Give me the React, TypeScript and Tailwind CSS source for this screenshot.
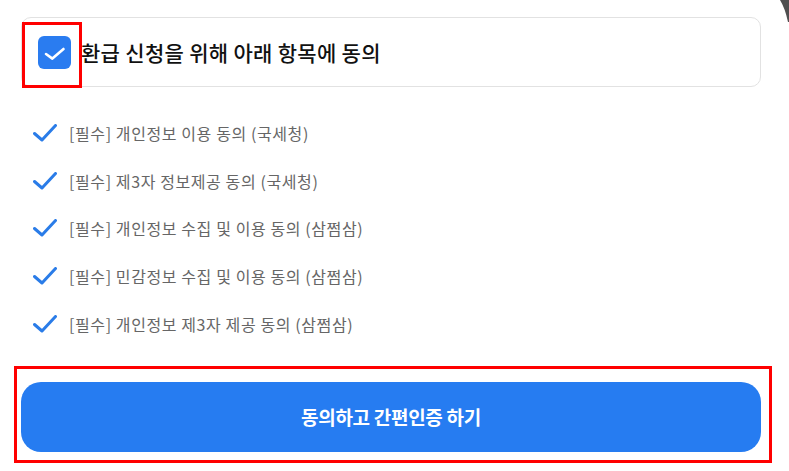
import React from "react";

const items = [
  "[필수] 개인정보 이용 동의 (국세청)",
  "[필수] 제3자 정보제공 동의 (국세청)",
  "[필수] 개인정보 수집 및 이용 동의 (삼쩜삼)",
  "[필수] 민감정보 수집 및 이용 동의 (삼쩜삼)",
  "[필수] 개인정보 제3자 제공 동의 (삼쩜삼)",
];

function Check() {
  return (
    <svg width="24" height="18" viewBox="0 0 24 18" fill="none" className="shrink-0">
      <path d="M1.5 9.5 L9 16 L22.5 1.5" stroke="#2a7ce8" strokeWidth="3" strokeLinecap="round" strokeLinejoin="round" />
    </svg>
  );
}

export default function App() {
  return (
    <div
      className="relative w-[789px] h-[471px] bg-white overflow-hidden"
      style={{ fontFamily: '"Noto Sans CJK KR", "Noto Sans", sans-serif' }}
    >
      <div className="pl-[21px] pr-[28px] pt-[17px]">
        <div className="h-[70px] border border-[#e2e2e2] rounded-[10px] flex items-center pl-[16px] gap-[10px]">
          <div className="w-[33px] h-[33px] rounded-[6px] bg-[#2a7cf0] flex items-center justify-center">
            <svg width="33" height="33" viewBox="0 0 33 33" fill="none">
              <path d="M8 18 L14.4 22.6 L25.5 13" stroke="white" strokeWidth="2.6" strokeLinecap="round" strokeLinejoin="round" />
            </svg>
          </div>
          <span className="text-[21px] font-medium text-[#111] tracking-[0.3px] leading-none">
            환급 신청을 위해 아래 항목에 동의
          </span>
        </div>

        <div className="mt-[22px] flex flex-col">
          {items.map((t) => (
            <div key={t} className="h-[47.75px] flex items-center pl-[12px] gap-[12px]">
              <Check />
              <span className="text-[16px] text-[#666] tracking-[0.6px] leading-none">{t}</span>
            </div>
          ))}
        </div>

        <button className="mt-[34px] w-full h-[70px] rounded-[20px] bg-[#267cf1] text-white text-[19px] font-bold tracking-[-0.3px] flex items-center justify-center">
          동의하고 간편인증 하기
        </button>
      </div>

      {/* red annotation boxes */}
      <div className="absolute left-[22px] top-[22px] w-[60px] h-[66px] border-[3px] border-[#ff0000]" />
      <div className="absolute left-[14px] top-[366px] w-[758px] h-[97px] border-[3px] border-[#ff0000]" />

      {/* top-right dark corner */}
      <svg className="absolute right-0 top-0" width="10" height="22" viewBox="0 0 10 22">
        <path d="M1 0 Q6 8 9 22 L10 22 L10 0 Z" fill="#4f4f4f" />
      </svg>
    </div>
  );
}
